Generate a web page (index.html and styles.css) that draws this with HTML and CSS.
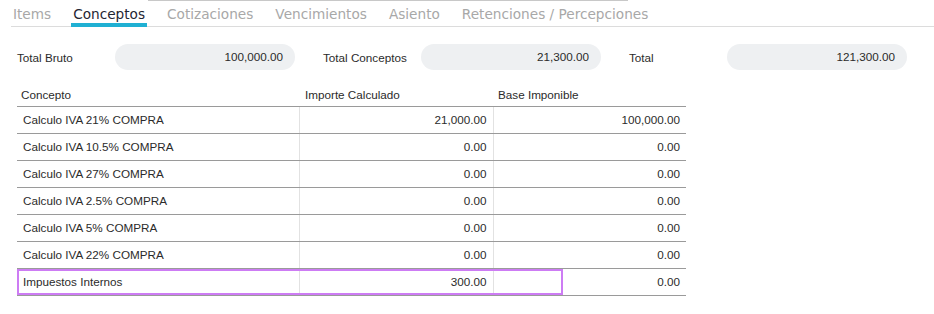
FILE: index.html
```html
<!DOCTYPE html>
<html lang="es">
<head>
  <meta charset="UTF-8">
  <meta name="viewport" content="width=device-width, initial-scale=1.0">
  <title>Conceptos</title>
  <link rel="stylesheet" href="styles.css">
</head>
<body>
  <div class="top-edge"></div>
  <nav class="tabs">
    <a class="tab">Items</a>
    <a class="tab active">Conceptos</a>
    <a class="tab">Cotizaciones</a>
    <a class="tab">Vencimientos</a>
    <a class="tab">Asiento</a>
    <a class="tab">Retenciones / Percepciones</a>
  </nav>

  <div class="totals">
    <div class="total-group">
      <span class="total-label">Total Bruto</span>
      <div class="pill">100,000.00</div>
    </div>
    <div class="total-group">
      <span class="total-label">Total Conceptos</span>
      <div class="pill">21,300.00</div>
    </div>
    <div class="total-group">
      <span class="total-label">Total</span>
      <div class="pill">121,300.00</div>
    </div>
  </div>

  <div class="grid-wrap">
    <table class="grid">
      <thead>
        <tr><th>Concepto</th><th>Importe Calculado</th><th>Base Imponible</th></tr>
      </thead>
      <tbody>
        <tr><td>Calculo IVA 21% COMPRA</td><td class="num">21,000.00</td><td class="num">100,000.00</td></tr>
        <tr><td>Calculo IVA 10.5% COMPRA</td><td class="num">0.00</td><td class="num">0.00</td></tr>
        <tr><td>Calculo IVA 27% COMPRA</td><td class="num">0.00</td><td class="num">0.00</td></tr>
        <tr><td>Calculo IVA 2.5% COMPRA</td><td class="num">0.00</td><td class="num">0.00</td></tr>
        <tr><td>Calculo IVA 5% COMPRA</td><td class="num">0.00</td><td class="num">0.00</td></tr>
        <tr><td>Calculo IVA 22% COMPRA</td><td class="num">0.00</td><td class="num">0.00</td></tr>
        <tr><td>Impuestos Internos</td><td class="num">300.00</td><td class="num">0.00</td></tr>
      </tbody>
    </table>
    <div class="focus-box"></div>
  </div>
</body>
</html>
```

FILE: styles.css
```css
:root {
  --text: #2b2b2b;
  --tab-muted: #a8a8a8;
  --tab-active: #1f2633;
  --accent: #1fb0d3;
  --line: #dcdcdc;
  --row-line: #9a9a9a;
  --cell-line: #e2e2e2;
  --pill-bg: #eef0f2;
  --focus: #cd7cf4;
}
* { box-sizing: border-box; margin: 0; padding: 0; }
body {
  background: #fff;
  color: var(--text);
  font-family: 'Liberation Sans', Arial, sans-serif;
  font-size: 11.7px;
}

/* cut-off edge of the panel above */
.top-edge {
  margin-left: 148px;
  width: 480px;
  height: 1px;
  background: #c8c8c8;
}

/* Tabs */
.tabs {
  display: flex;
  gap: 18px;
  height: 26px;
  margin-left: 11px;
  border-bottom: 1px solid var(--line);
}
.tab {
  display: block;
  padding: 4px 2px 0;
  font-family: 'DejaVu Sans', sans-serif;
  font-size: 13.65px;
  line-height: 18px;
  color: var(--tab-muted);
  cursor: pointer;
}
.tab.active {
  color: var(--tab-active);
  border-bottom: 4px solid var(--accent);
  margin-bottom: -1px;
}

/* Totals row */
.totals {
  display: flex;
  gap: 28px;
  margin: 17px 0 0 17px;
}
.total-group {
  display: flex;
  align-items: center;
}
.total-label {
  width: 98px;
}
.pill {
  width: 180px;
  height: 26px;
  line-height: 26px;
  padding-right: 12px;
  text-align: right;
  background: var(--pill-bg);
  border-radius: 13px;
}

/* Concepts grid */
.grid-wrap {
  position: relative;
  width: 669px;
  margin: 13px 0 0 17px;
}
.grid {
  width: 100%;
  border-collapse: collapse;
  table-layout: fixed;
}
.grid th {
  height: 23px;
  padding: 0 4px;
  text-align: left;
  font-weight: normal;
  border-bottom: 1px solid var(--row-line);
}
.grid th:nth-child(1) { width: 282px; }
.grid th:nth-child(2) { width: 194px; padding-left: 6px; }
.grid th:nth-child(3) { padding-left: 5px; }
.grid td {
  height: 27px;
  padding: 0 6px;
  border-bottom: 1px solid var(--row-line);
  border-left: 1px solid var(--cell-line);
}
.grid td:first-child { border-left: none; }
.grid .num { text-align: right; }

/* focused row outline */
.focus-box {
  position: absolute;
  left: 0;
  bottom: 1px;
  width: 546px;
  height: 26px;
  border: 2px solid var(--focus);
  pointer-events: none;
}
```
